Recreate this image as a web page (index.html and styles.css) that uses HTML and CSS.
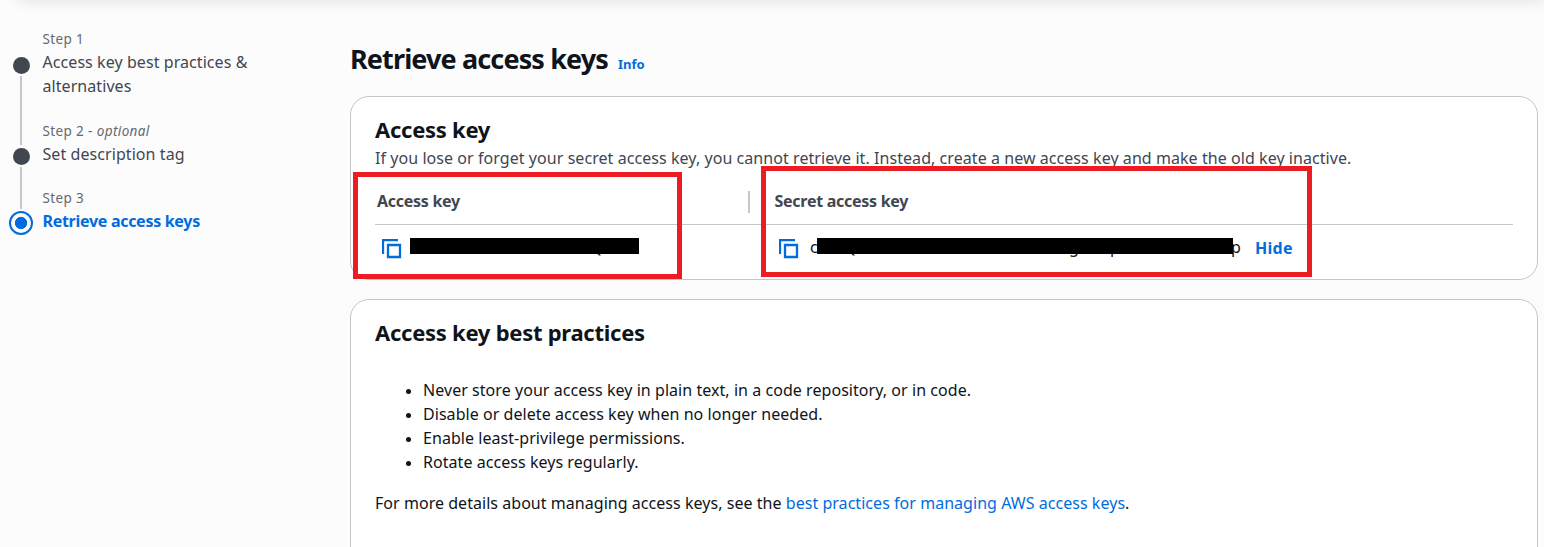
FILE: index.html
```html
<!DOCTYPE html>
<html lang="en">
<head>
<meta charset="utf-8">
<title>Retrieve access keys</title>
<link rel="stylesheet" href="styles.css">
</head>
<body>
<div class="topbar"></div>
<div class="page">
  <nav class="steps">
    <div class="step step-1">
      <div class="rail"><span class="lead"></span><span class="dot"></span><span class="line"></span></div>
      <div class="step-text"><div class="step-no">Step 1</div><div class="step-name">Access key best practices &amp;<br>alternatives</div></div>
    </div>
    <div class="step step-2">
      <div class="rail"><span class="lead"></span><span class="dot"></span><span class="line"></span></div>
      <div class="step-text"><div class="step-no">Step 2 - <i>optional</i></div><div class="step-name">Set description tag</div></div>
    </div>
    <div class="step step-3">
      <div class="rail"><span class="lead"></span><span class="dot active"></span></div>
      <div class="step-text"><div class="step-no">Step 3</div><div class="step-name current">Retrieve access keys</div></div>
    </div>
  </nav>
  <main class="content">
    <header class="title"><h1>Retrieve access keys</h1><a class="info">Info</a></header>
    <section class="card key-card">
      <h2>Access key</h2>
      <p class="desc">If you lose or forget your secret access key, you cannot retrieve it. Instead, create a new access key and make the old key inactive.</p>
      <div class="table">
        <div class="col">
          <div class="th">Access key</div>
          <div class="td">
            <svg class="copy" width="20" height="20" viewBox="0 0 20 20"><path d="M1 15V1H16M6 6H18V18H6Z"/></svg>
            <span class="secret secret-a"><span class="peek q1">Q</span><span class="bar"></span></span>
          </div>
          <div class="mark mark-a"></div>
        </div>
        <div class="col">
          <div class="th">Secret access key</div>
          <div class="td">
            <svg class="copy" width="20" height="20" viewBox="0 0 20 20"><path d="M1 15V1H16M6 6H18V18H6Z"/></svg>
            <span class="secret secret-b"><span class="peek c">c</span><span class="peek q2">Q</span><span class="peek g">g</span><span class="peek p1">p</span><span class="peek p2">p</span><span class="bar"></span></span>
            <a class="hide">Hide</a>
          </div>
          <div class="mark mark-b"></div>
        </div>
      </div>
    </section>
    <section class="card tips">
      <h2>Access key best practices</h2>
      <ul>
        <li>Never store your access key in plain text, in a code repository, or in code.</li>
        <li>Disable or delete access key when no longer needed.</li>
        <li>Enable least-privilege permissions.</li>
        <li>Rotate access keys regularly.</li>
      </ul>
      <p class="more">For more details about managing access keys, see the <a>best practices for managing AWS access keys</a>.</p>
    </section>
  </main>
</div>
</body>
</html>
```
FILE: styles.css
```css
* { box-sizing: border-box; }
body { margin: 0; height: 547px; overflow: hidden; background: #fcfcfd; color: #0f141a; font: 16px/24px "Noto Sans", sans-serif; }
h1, h2, p, ul { margin: 0; padding: 0; }
a { color: #006ce0; }
.topbar { height: 20px; margin: -20px 0 0 20px; box-shadow: 0 0 16px 1px rgba(0, 7, 22, .11); }
.page { display: flex; padding-top: 28px; }
.steps { width: 350px; flex: none; color: #424650; }
.step { display: flex; }
.step-1 { height: 92px; }
.step-2 { height: 67px; }
.rail { width: 42px; display: flex; flex-direction: column; align-items: center; flex: none; }
.lead { width: 2px; background: #c6c6cd; height: 25px; }
.step-1 .lead { height: 26px; background: none; }
.step-3 .lead { height: 22px; }
.line { width: 2px; background: #c6c6cd; flex: 1; }
.dot { width: 17px; height: 17px; margin: 2.5px 0; border-radius: 50%; background: #424650; }
.dot.active { width: 24px; height: 24px; margin: 2px 0; border: 2px solid #006ce0; background: radial-gradient(circle, #006ce0 5.8px, transparent 6.4px); }
.step-text { white-space: nowrap; padding-left: .5px; }
.step-no { font-size: 13.5px; line-height: 22px; letter-spacing: .38px; color: #656871; }
.step-name { letter-spacing: .07px; }
.current { color: #006ce0; font-weight: 700; letter-spacing: -.29px; }
.content { width: 1188px; flex: none; white-space: nowrap; }
.title { display: flex; align-items: baseline; gap: 10px; height: 68px; padding-top: 13px; }
h1 { font-size: 27px; line-height: 36px; letter-spacing: -.87px; }
.info { font-size: 13px; font-weight: 700; }
.card { border: 1px solid #c6c6cd; border-radius: 19px; background: #fff; padding: 0 24px; }
.key-card { height: 184px; padding-top: 18px; margin-bottom: 19px; }
h2 { font-size: 22px; line-height: 28px; letter-spacing: -.26px; margin-bottom: 1px; }
.desc { color: #424650; line-height: 28px; letter-spacing: .06px; }
.table { display: grid; grid-template-columns: 375px 763px; margin-top: 10px; }
.col { position: relative; }
.th { height: 43px; padding: 7px 0 0 2px; border-bottom: 1px solid #c6c6cd; color: #424650; font-weight: 700; letter-spacing: -.27px; }
.col:first-child .th { background: linear-gradient(#c6c6cd, #c6c6cd) 373px 9px / 2px 22px no-repeat; }
.col:last-child .th { padding-left: 24.5px; }
.td { display: flex; height: 46px; padding: 13px 0 0 7px; }
.col:last-child .td { padding-left: 29px; }
.copy { flex: none; margin-top: 1px; fill: none; stroke: #006ce0; stroke-width: 2.3; }
.secret { position: relative; height: 16px; }
.secret-a { width: 229px; margin-left: 8px; }
.secret-b { width: 416px; margin-left: 18px; }
.bar { position: absolute; inset: 0; background: #000; }
.peek { position: absolute; top: -3px; font-size: 16px; }
.q1 { left: 180px; }
.c { left: -7px; top: -3px; }
.q2 { left: 27px; }
.g { left: 252px; }
.p1 { left: 293px; }
.p2 { left: 414px; }
.hide { margin: -2px 0 0 22px; font-weight: 700; letter-spacing: .3px; }
.mark { position: absolute; border: 5px solid #ec1c24; }
.mark-a { left: -22px; top: -10px; width: 329px; height: 107px; }
.mark-b { left: 11px; top: -16px; width: 551px; height: 111px; }
.tips { height: 270px; padding-top: 18px; }
ul { list-style: none; padding-left: 48px; margin-top: 32px; letter-spacing: .05px; }
li { display: flex; align-items: center; }
li::before { content: ""; width: 5px; height: 5px; border-radius: 50%; background: #0f141a; margin: 2px 12px 0 -17px; }
.more { margin-top: 17px; letter-spacing: .04px; }
```
